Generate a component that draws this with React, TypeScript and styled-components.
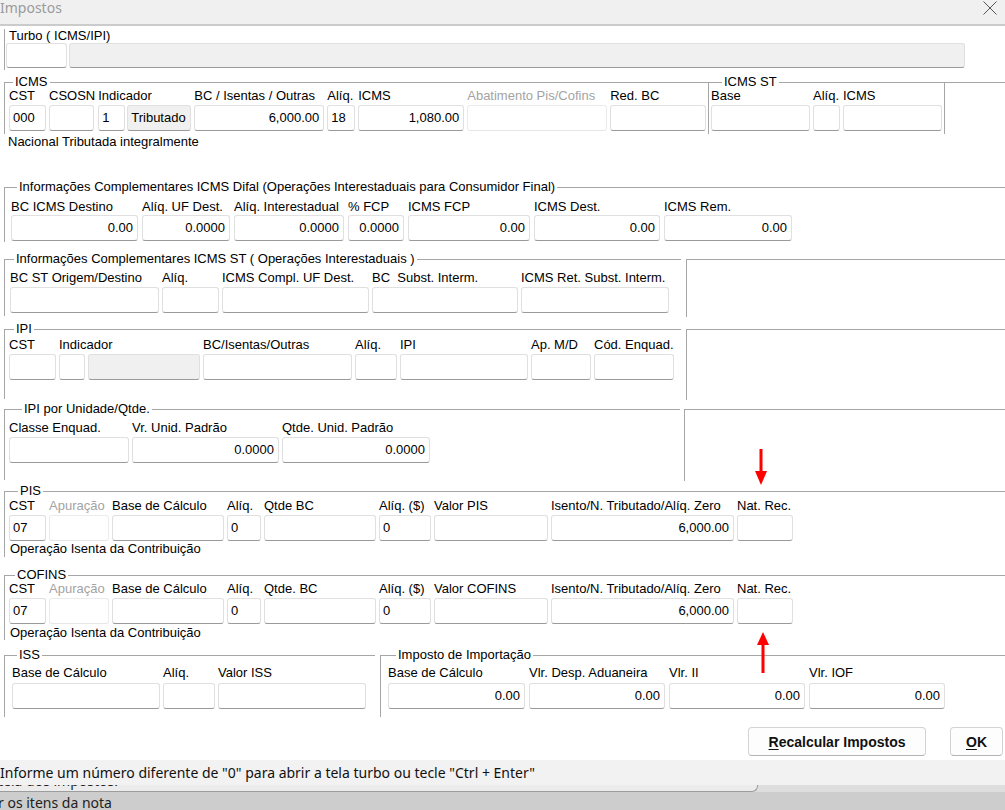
import styled, { createGlobalStyle } from "styled-components";

const GlobalStyle = createGlobalStyle`
  html, body { margin: 0; padding: 0; background: #fff; }
  body { font-family: "Liberation Sans", Arial, sans-serif; }
`;

const LINE = "#a6a6a6";

type Tone = "plain" | "shaded" | "off";
type BoxDef = { w: number; v?: string; right?: boolean; tone?: Tone };
type FieldDef = { label: string; boxes: BoxDef[]; muted?: boolean };

const Window = styled.div`
  position: relative;
  width: 1005px;
  height: 810px;
  overflow: hidden;
  background: #fff;
  display: flex;
  flex-direction: column;
  font-family: "Liberation Sans", Arial, sans-serif;
  font-size: 13px;
  color: #000;
`;

const TitleBar = styled.div`
  flex: none;
  height: 24px;
  display: flex;
  align-items: flex-start;
  justify-content: space-between;
  background: #f0f0f0;
  border-bottom: 2px solid #cbcbcb;
`;

const Title = styled.span`
  font-family: "Noto Sans", sans-serif;
  font-size: 14px;
  line-height: 16px;
  color: #9b9b9b;
`;

const Close = styled.svg`
  margin: 0 7px 0 0;
`;

const TurboPanel = styled.div`
  flex: none;
  margin: 3px 0 0 4px;
  border-left: 1px solid ${LINE};
  padding: 0 0 2px 1px;
`;

const Label = styled.div<{ $muted?: boolean; $indent?: number }>`
  line-height: 14px;
  white-space: pre;
  color: ${(p) => (p.$muted ? "#a3a3a3" : "#000")};
  padding-left: ${(p) => p.$indent ?? 0}px;
`;

const Boxes = styled.div<{ $gap?: number }>`
  display: flex;
  gap: ${(p) => p.$gap ?? 2}px;
`;

const Box = styled.div<{ $w: number; $tone: Tone; $right?: boolean; $h?: number }>`
  box-sizing: border-box;
  width: ${(p) => p.$w}px;
  height: ${(p) => p.$h ?? 26}px;
  line-height: ${(p) => (p.$h ?? 26) - 2}px;
  padding: 0 4px 0 3px;
  border: 1px solid ${(p) => (p.$tone === "off" ? "#ececec" : "#e0e0e0")};
  border-bottom-color: ${(p) => (p.$tone === "off" ? "#e6e6e6" : "#9a9a9a")};
  border-radius: 3px;
  background: ${(p) => (p.$tone === "shaded" ? "#f0f0f0" : "#fff")};
  text-align: ${(p) => (p.$right ? "right" : "left")};
  white-space: nowrap;
  overflow: hidden;
`;

const FieldCol = styled.div`
  display: flex;
  flex-direction: column;
  gap: var(--lg, 2px);
`;

const Fields = styled.div<{ $gap: number }>`
  display: flex;
  gap: ${(p) => p.$gap}px;
`;

const Row = styled.div<{ $top: number }>`
  flex: none;
  display: flex;
  align-items: flex-start;
  margin-top: ${(p) => p.$top}px;
  padding-left: 4px;
`;

const Group = styled.fieldset<{ $w?: number; $closed?: boolean; $ml?: number }>`
  margin: 0 0 0 ${(p) => p.$ml ?? 0}px;
  padding: 0;
  min-width: 0;
  border: none;
  border-top: 1px solid ${LINE};
  border-left: 1px solid ${LINE};
  border-right: ${(p) => (p.$closed ? `1px solid ${LINE}` : "none")};
  ${(p) => (p.$w ? `width: ${p.$w}px; flex: none;` : "flex: 1;")}
  box-sizing: border-box;
`;

const Legend = styled.legend<{ $at: number }>`
  margin-left: ${(p) => p.$at - 3}px;
  padding: 0 2px;
  font-size: 13px;
  line-height: 14px;
`;

const GroupBody = styled.div<{ $pad: string; $lg: number }>`
  padding: ${(p) => p.$pad};
  --lg: ${(p) => p.$lg}px;
`;

const SideBox = styled.div<{ $h: number; $ml?: number }>`
  flex: 1;
  margin: 7px 0 0 ${(p) => p.$ml ?? 5}px;
  height: ${(p) => p.$h}px;
  border-top: 1px solid ${LINE};
  border-left: 1px solid ${LINE};
`;

const Filler = styled.div`
  flex: 1;
  margin-top: 7px;
  border-top: 1px solid ${LINE};
`;

const Note = styled.div<{ $top: number; $indent: number }>`
  flex: none;
  margin-top: ${(p) => p.$top}px;
  padding-left: ${(p) => p.$indent}px;
  line-height: 14px;
`;

const ButtonBar = styled.div`
  flex: none;
  display: flex;
  justify-content: flex-end;
  gap: 24px;
  margin-top: 10px;
  padding-right: 2px;
`;

const Button = styled.button<{ $w: number }>`
  width: ${(p) => p.$w}px;
  height: 29px;
  padding: 0;
  background: #fdfdfd;
  border: 1px solid #d3d3d3;
  border-bottom-color: #b4b4b4;
  border-radius: 4px;
  font-family: "Liberation Sans", Arial, sans-serif;
  font-weight: bold;
  font-size: 14px;
  color: #111;
  u { text-decoration-thickness: 1px; text-underline-offset: 2px; }
`;

const StatusBar = styled.div`
  flex: none;
  margin-top: 4px;
  height: 25px;
  display: flex;
  align-items: center;
  background: #f2f2f2;
  font-family: "Noto Sans", sans-serif;
  font-size: 14px;
  color: #111;
  white-space: nowrap;
`;

const Backdrop = styled.div`
  flex: 1;
  background: #cdcdcd;
  display: flex;
  flex-direction: column;
  font-family: "Noto Sans", sans-serif;
  font-size: 14px;
  color: #222;
`;

const TipRow = styled.div`
  display: flex;
  height: 7px;
  background: #dedede;
`;

const Tip = styled.div`
  width: 757px;
  height: 6px;
  overflow: hidden;
  background: #ececec;
  border-right: 1px solid #9c9c9c;
  border-bottom: 1px solid #9c9c9c;
  border-bottom-right-radius: 6px;
  white-space: nowrap;
`;

const TipText = styled.div`
  margin-top: -12px;
  line-height: 16px;
  margin-left: -2px;
`;

const BackText = styled.div`
  margin-top: 3px;
  line-height: 16px;
  margin-left: -2px;
`;

const Arrow = styled.svg<{ $x: number; $y: number }>`
  position: absolute;
  left: ${(p) => p.$x}px;
  top: ${(p) => p.$y}px;
`;

function Field({ f, gap }: { f: FieldDef; gap: number }) {
  return (
    <FieldCol>
      <Label $muted={f.muted}>{f.label}</Label>
      <Boxes $gap={gap}>
        {f.boxes.map((b, i) => (
          <Box key={i} $w={b.w} $tone={b.tone ?? "plain"} $right={b.right}>
            {b.v}
          </Box>
        ))}
      </Boxes>
    </FieldCol>
  );
}

const one = (label: string, w: number, v?: string, right = false, tone: Tone = "plain"): FieldDef => ({
  label,
  boxes: [{ w, v, right, tone }],
});

const icms: FieldDef[] = [
  one("CST", 37, "000"),
  one("CSOSN", 45),
  { label: "Indicador", boxes: [{ w: 27, v: "1" }, { w: 64, v: "Tributado", tone: "shaded" }] },
  one("BC / Isentas / Outras", 130, "6,000.00", true),
  one("Alíq.", 28, "18"),
  one("ICMS", 106, "1,080.00", true),
  { ...one("Abatimento Pis/Cofins", 140, undefined, false, "off"), muted: true },
  one("Red. BC", 96),
];

const icmsSt: FieldDef[] = [one("Base", 99), one("Alíq.", 27), one("ICMS", 99)];

const difal: FieldDef[] = [
  one("BC ICMS Destino", 127, "0.00", true),
  one("Alíq. UF Dest.", 88, "0.0000", true),
  one("Alíq. Interestadual", 110, "0.0000", true),
  one("% FCP", 56, "0.0000", true),
  one("ICMS FCP", 122, "0.00", true),
  one("ICMS Dest.", 126, "0.00", true),
  one("ICMS Rem.", 128, "0.00", true),
];

const st: FieldDef[] = [
  one("BC ST Origem/Destino", 149),
  one("Alíq.", 57),
  one("ICMS Compl. UF Dest.", 147),
  one("BC  Subst. Interm.", 146),
  one("ICMS Ret. Subst. Interm.", 148),
];

const ipi: FieldDef[] = [
  one("CST", 47),
  { label: "Indicador", boxes: [{ w: 26 }, { w: 112, tone: "shaded" }] },
  one("BC/Isentas/Outras", 149),
  one("Alíq.", 42),
  one("IPI", 128),
  one("Ap. M/D", 60),
  one("Cód. Enquad.", 80),
];

const ipiUnit: FieldDef[] = [
  one("Classe Enquad.", 120),
  one("Vr. Unid. Padrão", 147, "0.0000", true),
  one("Qtde. Unid. Padrão", 148, "0.0000", true),
];

const contrib = (qtde: string, valor: string): FieldDef[] => [
  one("CST", 37, "07"),
  { ...one("Apuração", 60, undefined, false, "off"), muted: true },
  one("Base de Cálculo", 112),
  one("Alíq.", 34, "0"),
  one(qtde, 112),
  one("Alíq. ($)", 52, "0"),
  one(valor, 114),
  one("Isento/N. Tributado/Alíq. Zero", 183, "6,000.00", true),
  one("Nat. Rec.", 56),
];

const iss: FieldDef[] = [one("Base de Cálculo", 148), one("Alíq.", 52), one("Valor ISS", 148)];

const importacao: FieldDef[] = [
  one("Base de Cálculo", 137, "0.00", true),
  one("Vlr. Desp. Aduaneira", 136, "0.00", true),
  one("Vlr. II", 136, "0.00", true),
  one("Vlr. IOF", 136, "0.00", true),
];

function FieldRow({ list, gap, inner = 2 }: { list: FieldDef[]; gap: number; inner?: number }) {
  return (
    <Fields $gap={gap}>
      {list.map((f, i) => (
        <Field key={i} f={f} gap={inner} />
      ))}
    </Fields>
  );
}

export default function App() {
  return (
    <Window>
      <GlobalStyle />
      <TitleBar>
        <Title>Impostos</Title>
        <Close width="16" height="16" viewBox="0 0 16 16">
          <path d="M1.5 1.5 L14.5 14.5 M14.5 1.5 L1.5 14.5" stroke="#555" strokeWidth="1" fill="none" />
        </Close>
      </TitleBar>

      <TurboPanel>
        <Label $indent={3}>Turbo ( ICMS/IPI)</Label>
        <Boxes $gap={2}>
          <Box $w={61} $tone="plain" $h={25} />
          <Box $w={896} $tone="shaded" $h={25} />
        </Boxes>
      </TurboPanel>

      <Row $top={5}>
        <Group $w={704}>
          <Legend $at={11}>ICMS</Legend>
          <GroupBody $pad="0 0 3px 4px" $lg={2}>
            <FieldRow list={icms} gap={3} />
          </GroupBody>
        </Group>
        <Group $w={237} $closed>
          <Legend $at={16}>ICMS ST</Legend>
          <GroupBody $pad="0 0 3px 2px" $lg={2}>
            <FieldRow list={icmsSt} gap={3} />
          </GroupBody>
        </Group>
        <Filler />
      </Row>
      <Note $top={1} $indent={8}>Nacional Tributada integralmente</Note>

      <Row $top={31}>
        <Group>
          <Legend $at={15}>Informações Complementares ICMS Difal (Operações Interestaduais para Consumidor Final)</Legend>
          <GroupBody $pad="6px 0 1px 6px" $lg={1}>
            <FieldRow list={difal} gap={4} />
          </GroupBody>
        </Group>
      </Row>

      <Row $top={10}>
        <Group $w={677}>
          <Legend $at={12}>Informações Complementares ICMS ST ( Operações Interestaduais )</Legend>
          <GroupBody $pad="5px 0 3px 5px" $lg={2}>
            <FieldRow list={st} gap={3} />
          </GroupBody>
        </Group>
        <SideBox $h={57} />
      </Row>

      <Row $top={5}>
        <Group $w={677}>
          <Legend $at={12}>IPI</Legend>
          <GroupBody $pad="2px 0 19px 4px" $lg={2}>
            <FieldRow list={ipi} gap={3} inner={3} />
          </GroupBody>
        </Group>
        <SideBox $h={70} />
      </Row>

      <Row $top={2}>
        <Group $w={676}>
          <Legend $at={20}>IPI por Unidade/Qtde.</Legend>
          <GroupBody $pad="5px 0 17px 4px" $lg={2}>
            <FieldRow list={ipiUnit} gap={3} />
          </GroupBody>
        </Group>
        <SideBox $h={71} $ml={4} />
      </Row>

      <Row $top={3}>
        <Group>
          <Legend $at={16}>PIS</Legend>
          <GroupBody $pad="1px 0 1px 4px" $lg={2}>
            <FieldRow list={contrib("Qtde BC", "Valor PIS")} gap={3} />
            <Note $top={1} $indent={1}>Operação Isenta da Contribuição</Note>
          </GroupBody>
        </Group>
      </Row>

      <Row $top={11}>
        <Group>
          <Legend $at={13}>COFINS</Legend>
          <GroupBody $pad="0 0 0 4px" $lg={2}>
            <FieldRow list={contrib("Qtde. BC", "Valor COFINS")} gap={3} />
            <Note $top={2} $indent={1}>Operação Isenta da Contribuição</Note>
          </GroupBody>
        </Group>
      </Row>

      <Row $top={8}>
        <Group $w={371}>
          <Legend $at={15}>ISS</Legend>
          <GroupBody $pad="4px 0 8px 7px" $lg={3}>
            <FieldRow list={iss} gap={3} />
          </GroupBody>
        </Group>
        <Group $ml={5}>
          <Legend $at={18}>Imposto de Importação</Legend>
          <GroupBody $pad="4px 0 8px 7px" $lg={3}>
            <FieldRow list={importacao} gap={4} />
          </GroupBody>
        </Group>
      </Row>

      <ButtonBar>
        <Button $w={178}>
          <u>R</u>ecalcular Impostos
        </Button>
        <Button $w={53}>
          <u>O</u>K
        </Button>
      </ButtonBar>

      <StatusBar>Informe um número diferente de "0" para abrir a tela turbo ou tecle "Ctrl + Enter"</StatusBar>

      <Backdrop>
        <TipRow>
          <Tip>
            <TipText>tela dos impostos.</TipText>
          </Tip>
        </TipRow>
        <BackText>r os itens da nota</BackText>
      </Backdrop>

      <Arrow $x={754} $y={449} width="14" height="36" viewBox="0 0 14 36">
        <rect x="5.5" y="0" width="3" height="24" fill="#f00" />
        <path d="M1 22 L13 22 L7 36 Z" fill="#f00" />
      </Arrow>
      <Arrow $x={756} $y={632} width="14" height="42" viewBox="0 0 14 42">
        <path d="M7 0 L1 13 L13 13 Z" fill="#f00" />
        <rect x="5.5" y="11" width="3" height="30" fill="#f00" />
      </Arrow>
    </Window>
  );
}
